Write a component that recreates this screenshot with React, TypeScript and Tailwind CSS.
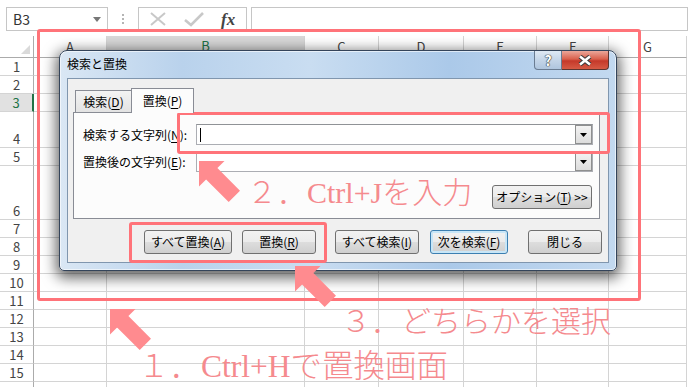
import React from 'react';

const COLS = [
  { name: 'A', w: 'w-[73px]' },
  { name: 'B', w: 'w-[198px]', sel: true },
  { name: 'C', w: 'w-[74px]' },
  { name: 'D', w: 'w-[85px]' },
  { name: 'E', w: 'w-[73px]' },
  { name: 'F', w: 'w-[72px]' },
  { name: 'G', w: 'w-[78px]' },
];

const ROWS = [
  { n: 1, h: 'h-[18px]' },
  { n: 2, h: 'h-[18px]' },
  { n: 3, h: 'h-[18px]', sel: true },
  { n: 4, h: 'h-[36px]' },
  { n: 5, h: 'h-[18px]' },
  { n: 6, h: 'h-[54px]' },
  { n: 7, h: 'h-[18px]' },
  { n: 8, h: 'h-[18px]' },
  { n: 9, h: 'h-[18px]' },
  { n: 10, h: 'h-[18px]' },
  { n: 11, h: 'h-[18px]' },
  { n: 12, h: 'h-[18px]' },
  { n: 13, h: 'h-[18px]' },
  { n: 14, h: 'h-[18px]' },
  { n: 15, h: 'h-[18px]' },
  { n: 16, h: 'h-[18px]', hidden: true },
];

const U: React.FC<{ c: string }> = ({ c }) => (
  <span className="underline underline-offset-[2px] decoration-[1px]">{c}</span>
);

const btn =
  'h-[24px] flex items-center justify-center rounded-[3px] border text-[12px] text-black bg-[linear-gradient(#f2f2f2_0%,#ebebeb_50%,#dddddd_51%,#cfcfcf_100%)]';

const note =
  "absolute whitespace-nowrap font-light text-[#f58a8e] font-['Liberation_Serif','Noto_Sans_CJK_JP',serif]";

const DropArrow = () => (
  <svg width="7" height="4" viewBox="0 0 7 4">
    <polygon points="0,0 7,0 3.5,4" fill="#000" />
  </svg>
);

const Combo: React.FC<{ cursor?: boolean }> = ({ cursor }) => (
  <div className="w-[397px] h-[21px] flex border border-[#abadb3] border-t-[#8f9296] bg-white">
    <div className="flex-1 flex items-center pl-[3px]">
      {cursor && <div className="w-px h-[14px] bg-black" />}
    </div>
    <div className="w-[17px] h-full flex items-center justify-center border border-[#8e8f8f] bg-[linear-gradient(#f3f3f3,#dcdcdc)]">
      <DropArrow />
    </div>
  </div>
);

const Arrow: React.FC<{ pos: string }> = ({ pos }) => (
  <svg className={`absolute ${pos}`} width="42" height="42" viewBox="0 0 42 42">
    <polygon points="0,0 0,25.5 7.1,18.4 29.7,41 41,29.7 18.4,7.1 25.5,0" fill="#ff8b8f" />
  </svg>
);

export default function App() {
  return (
    <div className="relative w-[688px] h-[387px] overflow-hidden bg-white font-['Noto_Sans_CJK_JP',sans-serif]">
      {/* formula bar */}
      <div className="h-[36px] flex items-start pt-[7px] pl-[6px]">
        <div className="w-[102px] h-[24px] flex items-center justify-between border border-[#c6c6c6] pl-[6px] pr-[6px]">
          <span className="text-[14px] text-[#333] leading-none">B3</span>
          <svg width="8" height="5" viewBox="0 0 8 5">
            <polygon points="0,0 8,0 4,5" fill="#777" />
          </svg>
        </div>
        <div className="w-[30px] h-[24px] flex flex-col items-center justify-center gap-[2px]">
          <div className="w-[2px] h-[2px] bg-[#b5b5b5]" />
          <div className="w-[2px] h-[2px] bg-[#b5b5b5]" />
          <div className="w-[2px] h-[2px] bg-[#b5b5b5]" />
        </div>
        <div className="w-[109px] h-[24px] flex items-center border border-[#c6c6c6]">
          <svg className="ml-[10px]" width="18" height="14" viewBox="0 0 18 14">
            <path d="M2 1 L16 13 M16 1 L2 13" stroke="#c8c8c8" strokeWidth="2" fill="none" />
          </svg>
          <svg className="ml-[17px]" width="20" height="15" viewBox="0 0 20 15">
            <path d="M1 8 L7 13 L19 1" stroke="#c8c8c8" strokeWidth="2.6" fill="none" />
          </svg>
          <span className="ml-[17px] text-[17px] italic font-bold text-[#444] font-['Liberation_Serif',serif] leading-none">
            fx
          </span>
        </div>
        <div className="ml-[4px] flex-1 h-[24px] border border-[#c6c6c6]" />
      </div>

      {/* column headers */}
      <div className="flex h-[22px]">
        <div className="w-[34px] h-full border-r border-b border-[#ababab] flex items-end justify-end pr-[3px] pb-[3px]">
          <svg width="9" height="9" viewBox="0 0 9 9">
            <polygon points="9,0 9,9 0,9" fill="#dadada" />
          </svg>
        </div>
        {COLS.map((c) => (
          <div
            key={c.name}
            className={`${c.w} h-full flex items-center justify-center border-r border-[#d4d4d4] text-[13px] ${
              c.sel
                ? 'bg-[#d8d8d8] text-[#217346] border-b-2 border-b-[#217346]'
                : 'text-[#444] border-b border-b-[#ababab]'
            }`}
          >
            {c.name}
          </div>
        ))}
      </div>

      {/* rows */}
      {ROWS.map((r) => (
        <div key={r.n} className={`flex ${r.h}`}>
          <div
            className={`w-[34px] h-full flex items-end justify-center border-b border-[#d4d4d4] text-[13px] leading-[17px] ${
              r.sel
                ? 'bg-[#e1e1e1] text-[#217346] border-r-2 border-r-[#217346]'
                : 'text-[#444] border-r border-r-[#ababab]'
            }`}
          >
            {!r.hidden && r.n}
          </div>
          {COLS.map((c) => (
            <div key={c.name} className={`${c.w} h-full border-r border-b border-[#d4d4d4]`} />
          ))}
        </div>
      ))}

      {/* find & replace dialog */}
      <div className="absolute left-[59px] top-[50px] w-[558px] h-[221px] rounded-t-[8px] rounded-b-[5px] border border-[#34445a] bg-[linear-gradient(90deg,#dae7f4_0%,#b9d2ec_22%,#c9ddf1_45%,#abc9e9_70%,#c3d9f0_100%)] shadow-[0_4px_14px_3px_rgba(0,0,0,0.6),inset_0_0_0_1px_rgba(255,255,255,0.6)]">
        <div className="h-[27px] flex items-start">
          <div className="flex-1 pl-[7px] pt-[5px] text-[12px] text-black leading-[16px]">検索と置換</div>
          <div className="w-[28px] h-[19px] flex items-center justify-center rounded-bl-[4px] border border-t-0 border-[#6a7c92] bg-[linear-gradient(#dfe9f4,#c4d5e8_50%,#afc5de)]">
            <span className="text-[14px] font-bold text-white leading-none [text-shadow:0_0_1px_#333,0_0_1px_#333,0_0_1px_#333]">
              ?
            </span>
          </div>
          <div className="w-[47px] h-[19px] mr-[7px] flex items-center justify-center rounded-br-[4px] border border-t-0 border-l-0 border-[#5d3530] bg-[linear-gradient(#eba79a,#d9604c_45%,#c5392a_55%,#d65a44)]">
            <svg width="18" height="11" viewBox="0 0 18 11">
              <path d="M4 1.5 L14 9.5 M14 1.5 L4 9.5" stroke="#3a3a3a" strokeWidth="4.6" fill="none" />
              <path d="M4 1.5 L14 9.5 M14 1.5 L4 9.5" stroke="#fff" strokeWidth="2.6" fill="none" />
            </svg>
          </div>
        </div>

        <div className="ml-[7px] w-[542px] h-[185px] border border-[#8096ae] bg-[#f0f0f0]">
          {/* tabs */}
          <div className="h-[33px] flex items-end pl-[7px]">
            <div className="w-[57px] h-[22px] flex items-center justify-center border border-b-0 border-[#898c95] bg-[linear-gradient(#f3f3f3,#e3e3e3)] text-[12px]">
              検索(<U c="D" />)
            </div>
            <div className="relative z-10 -ml-px -mb-px w-[63px] h-[25px] flex items-center justify-center border border-b-0 border-[#898c95] bg-[#fcfcfc] text-[12px]">
              置換(<U c="P" />)
            </div>
          </div>
          {/* panel */}
          <div className="ml-[5px] w-[527px] h-[107px] border border-[#898c95] bg-[#fcfcfc] pt-[11px] pl-[9px]">
            <div className="flex items-center h-[21px]">
              <div className="w-[113px] text-[12px] text-black">
                検索する文字列(<U c="N" />):
              </div>
              <Combo cursor />
            </div>
            <div className="flex items-center h-[21px] mt-[6px]">
              <div className="w-[113px] text-[12px] text-black">
                置換後の文字列(<U c="E" />):
              </div>
              <Combo />
            </div>
            <div className="flex justify-end pr-[7px] mt-[13px]">
              <div className={`${btn} w-[100px] h-[23px] border-[#707070]`}>
                オプション(<U c="T" />) &gt;&gt;
              </div>
            </div>
          </div>
          {/* buttons */}
          <div className="flex mt-[11px] ml-[76px]">
            <div className={`${btn} w-[88px] border-[#707070]`}>
              すべて置換(<U c="A" />)
            </div>
            <div className={`${btn} w-[74px] ml-[10px] border-[#707070]`}>
              置換(<U c="R" />)
            </div>
            <div className={`${btn} w-[84px] ml-[19px] border-[#707070]`}>
              すべて検索(<U c="I" />)
            </div>
            <div className={`${btn} w-[78px] ml-[11px] border-[#3c7fb1] shadow-[inset_0_0_0_2px_#c8e6f7]`}>
              次を検索(<U c="F" />)
            </div>
            <div className={`${btn} w-[74px] ml-[20px] border-[#707070]`}>閉じる</div>
          </div>
        </div>
      </div>

      {/* annotations */}
      <div className="absolute left-[37px] top-[29px] w-[604px] h-[272px] border-[3px] border-[#ff7379] rounded-[3px]" />
      <div className="absolute left-[177px] top-[112px] w-[433px] h-[42px] border-[3px] border-[#ff7379] rounded-[3px]" />
      <div className="absolute left-[129px] top-[222px] w-[198px] h-[41px] border-[3px] border-[#ff7379] rounded-[3px]" />

      <Arrow pos="left-[110px] top-[309px]" />
      <Arrow pos="left-[199px] top-[161px]" />
      <Arrow pos="left-[295px] top-[266px]" />

      <div className={`${note} left-[247px] top-[178px] text-[30px] leading-[30px]`}>２．Ctrl+Jを入力</div>
      <div className={`${note} left-[341px] top-[307px] text-[30px] leading-[30px]`}>３．どちらかを選択</div>
      <div className={`${note} left-[138px] top-[351px] text-[31.5px] leading-[31.5px]`}>１．Ctrl+Hで置換画面</div>
    </div>
  );
}
